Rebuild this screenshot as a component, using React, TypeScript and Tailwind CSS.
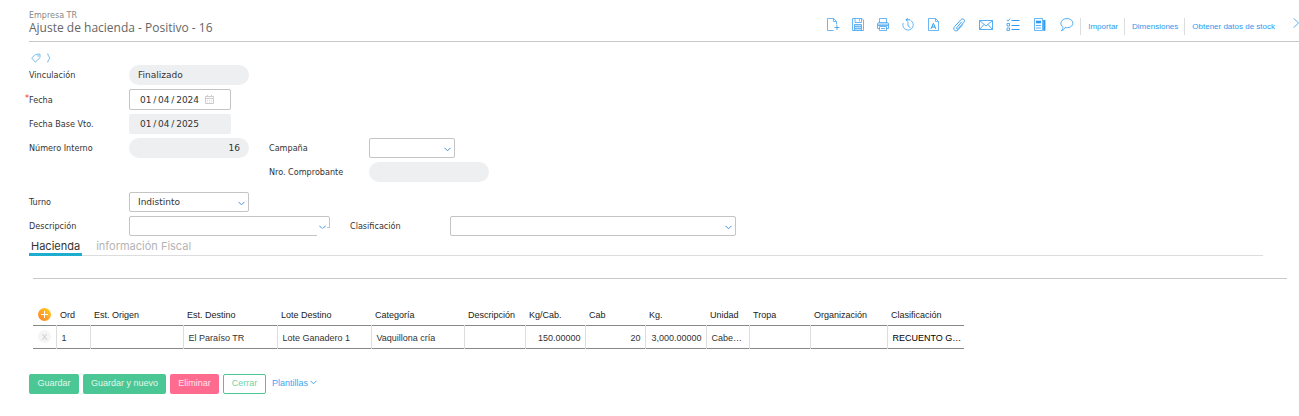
import type { ReactNode } from "react";

const uiFont = "font-['DejaVu_Sans_Condensed','DejaVu_Sans',sans-serif]";
const valueFont = "font-['DejaVu_Sans',sans-serif] text-[9px]";

function Icon({ children, className = "h-3.5 w-3.5" }: { children: ReactNode; className?: string }) {
  return (
    <svg viewBox="0 0 14 14" className={className} fill="none" stroke="currentColor" aria-hidden="true">
      {children}
    </svg>
  );
}

const firstTools: { label: string; icon: ReactNode }[] = [
  {
    label: "Nuevo",
    icon: (
      <>
        <path d="M7.5 12.5H1.5V.5H7.5L10.5 3.5V6.5M7.5 .5V3.5H10.5" strokeWidth=".7" />
        <path d="M11 7V12M8.5 9.5H13.5" strokeWidth=".8" />
      </>
    ),
  },
  {
    label: "Grabar",
    icon: (
      <>
        <path d="M1.5 .5H11L12.5 2V12.5H1.5ZM4 .5V4.5H10.5V.5M3.5 12.5V6.5H10.5V12.5" strokeWidth=".7" />
        <path d="M4 8.5H10M4 10.5H10M8.5 1V3.5" strokeWidth=".6" />
        <path d="M3.5 6.5H10.5V12.5H3.5Z" fill="currentColor" fillOpacity=".3" stroke="none" />
      </>
    ),
  },
  {
    label: "Imprimir",
    icon: (
      <>
        <path d="M3.5 4.5V.5H10.5V4.5M3.5 10.5H1.5V5.5L2.5 4.5H11.5L12.5 5.5V10.5H10.5M3.5 8.5H10.5V12.5H3.5Z" strokeWidth=".7" />
        <path d="M1.5 5H12.5V8H1.5Z" fill="currentColor" fillOpacity=".35" stroke="none" />
        <path d="M2 7.3H12M5 10.5H9" strokeWidth=".7" />
      </>
    ),
  },
  {
    label: "Historial",
    icon: (
      <>
        <path d="M9.5 2.3A5.2 5.2 0 1 1 2.2 5M7 4V8L9.5 9.8" strokeWidth=".7" />
        <path d="M5 1.8H9M6.8 0L5 1.8L6.8 3.6" strokeWidth=".9" />
      </>
    ),
  },
  {
    label: "Exportar PDF",
    icon: (
      <>
        <path d="M2.5 .5H9.5L12.5 3.5V12.5H2.5ZM9.5 .5V3.5H12.5" strokeWidth=".7" />
        <path d="M5 10.8L7.4 5.3L9.8 10.8M6 9H9" />
      </>
    ),
  },
];

const lastTools: { label: string; icon: ReactNode }[] = [
  {
    label: "Adjuntos",
    icon: (
      <path
        d="M9.8 3.7L4.8 9.5C3.8 10.8 5.3 11.6 6.2 10.6L12 4.2C13.6 2 11 -.3 9 1.6L2.6 8.6C.2 11.4 3.6 14.4 6 11.9L10.8 6.5"
        strokeWidth=".9"
      />
    ),
  },
  {
    label: "Correo",
    icon: <path d="M.5 2.5H13.5V11.5H.5ZM.5 2.5L7 8L13.5 2.5M.5 11.5L5 6.5M13.5 11.5L9 6.5" strokeWidth=".8" />,
  },
  {
    label: "Tareas",
    icon: (
      <>
        <path d="M5.5 2.5H13.5M5.5 7.5H13.5M5.5 11.5H13.5" />
        <path d="M.7 1.8L2 3.2L4.2 .5M1 5.5H3.5V8H1ZM1 10H3.5V12.5H1Z" strokeWidth=".8" />
      </>
    ),
  },
  {
    label: "Noticias",
    icon: (
      <>
        <path d="M1.5 .5H9.5V12.5H1.5Z" strokeWidth=".7" />
        <path d="M3 4H8" strokeWidth="2.6" />
        <path d="M3 7.5H8M3 10H8" strokeWidth=".8" />
        <path d="M11.3 2V12.8" strokeWidth="2.2" />
      </>
    ),
  },
  {
    label: "Comentarios",
    icon: (
      <path
        d="M3 9.2C-1 6.5 .8 .6 7 .6S14.7 6.8 10.4 8.9C8.7 9.8 6.5 9.8 5 9.5C4.3 11.3 3.2 12.4 1.4 12.7C2.6 11.7 3.1 10.5 3 9.2Z"
        strokeWidth=".8"
      />
    ),
  },
];

function Chevron({ className = "" }: { className?: string }) {
  return (
    <svg viewBox="0 0 7 5" className={`h-[5px] w-[7px] ${className}`} fill="none" stroke="currentColor" aria-hidden="true">
      <path d="M.5 .8L3.5 3.8L6.5 .8" strokeWidth="1" />
    </svg>
  );
}

function Row({ id, label, children, required = false }: { id: string; label: string; children: ReactNode; required?: boolean }) {
  return (
    <div className="flex items-center">
      <label htmlFor={id} className="relative w-[100px] shrink-0">
        {required && <span className="absolute -left-1 -top-0.5 text-red-500">*</span>}
        {label}
      </label>
      {children}
    </div>
  );
}

function Select({ id, className, value = "" }: { id: string; className: string; value?: string }) {
  return (
    <div className={`relative h-5 ${className}`}>
      <select
        id={id}
        defaultValue={value}
        className={`h-full w-full appearance-none rounded-xs border border-[#c4c4c4] bg-white px-2 text-[#333] outline-none ${valueFont}`}
      >
        <option value={value}>{value}</option>
      </select>
      <Chevron className="pointer-events-none absolute right-1 top-[9px] text-[#4a90dc]" />
    </div>
  );
}

const columns = [
  { name: "Ord", value: "1", width: "w-[34px]" },
  { name: "Est. Origen", value: "", width: "w-[93px]" },
  { name: "Est. Destino", value: "El Paraíso TR", width: "w-[94px]" },
  { name: "Lote Destino", value: "Lote Ganadero 1", width: "w-[94px]" },
  { name: "Categoría", value: "Vaquillona cría", width: "w-[93px]" },
  { name: "Descripción", value: "", width: "w-[61px]" },
  { name: "Kg/Cab.", value: "150.00000", width: "w-[60px]", right: true },
  { name: "Cab", value: "20", width: "w-[60px]", right: true },
  { name: "Kg.", value: "3,000.00000", width: "w-[61px]", right: true },
  { name: "Unidad", value: "Cabe…", width: "w-[43px]" },
  { name: "Tropa", value: "", width: "w-[61px]" },
  { name: "Organización", value: "", width: "w-[77px]" },
  { name: "Clasificación", value: "RECUENTO G…", width: "w-[77px]", dark: true },
];

const linkBase = "flex h-[17px] items-center border-l border-[#ddd] pl-[7px] pt-px";
const readOnlyPill = `h-5 w-[120px] rounded-full bg-[#eeeff1] px-[9px] outline-none ${valueFont}`;
const buttonBase = "h-5 rounded-xs pb-0.5 text-[9px]";

export default function App() {
  return (
    <main className={`bg-white pl-[29px] text-[9px] leading-3 text-[#333] ${uiFont}`}>
      <header className="flex h-[42px] items-start justify-between border-b border-[#c8c8cc]">
        <div className="pt-3 text-[#666]">
          <p className="font-['DejaVu_Sans',sans-serif] text-[8px] leading-2 text-[#888]">Empresa TR</p>
          <h1 className="font-['Open_Sans',sans-serif] text-[12px] leading-[15px]">Ajuste de hacienda - Positivo - 16</h1>
        </div>
        <nav className="flex items-start pt-[18px] font-['Liberation_Sans',sans-serif] text-[8px] text-[#2b9af0]">
          {firstTools.map((t) => (
            <button key={t.label} type="button" aria-label={t.label} className="flex w-[25px] justify-center">
              <Icon>{t.icon}</Icon>
            </button>
          ))}
          {lastTools.map((t) => (
            <button key={t.label} type="button" aria-label={t.label} className="flex w-[27px] justify-center">
              <Icon>{t.icon}</Icon>
            </button>
          ))}
          <a href="#importar" className={`${linkBase} pr-1.5`}>Importar</a>
          <a href="#dimensiones" className={`${linkBase} pr-1.5`}>Dimensiones</a>
          <a href="#stock" className={`${linkBase} pr-[18px]`}>Obtener datos de stock</a>
          <button type="button" aria-label="Siguiente">
            <svg viewBox="0 0 6 10" className="h-2.5 w-1.5" fill="none" stroke="currentColor" aria-hidden="true">
              <path d="M.5 .2L5.5 5L.5 9.8" strokeWidth=".8" />
            </svg>
          </button>
        </nav>
      </header>

      <div className="flex h-[23px] items-center gap-1.5 pl-0.5 pt-2 text-[#5cb0ee]">
        <svg viewBox="0 0 10 10" className="h-2.5 w-2.5" fill="none" stroke="currentColor" aria-hidden="true">
          <path d="M.7 5L4.5 1.5L9 1L9 4.7L4.3 9.2Z" strokeWidth=".8" />
          <circle cx="7.3" cy="2.8" r=".6" strokeWidth=".6" />
        </svg>
        <svg viewBox="0 0 4 10" className="h-2.5 w-1" fill="none" stroke="currentColor" aria-hidden="true">
          <path d="M.7 .5Q1 3 3 5Q1 7 .7 9.5" strokeWidth=".9" />
        </svg>
      </div>

      <form onSubmit={(e) => e.preventDefault()}>
        <section className="flex flex-col gap-1">
          <Row id="vinculacion" label="Vinculación">
            <input id="vinculacion" readOnly defaultValue="Finalizado" className={readOnlyPill} />
          </Row>
          <Row id="fecha" label="Fecha" required>
            <div className="flex h-[21px] w-[102px] items-center rounded-xs border border-[#c4c4c4] pl-2.5">
              <input id="fecha" defaultValue={"01\u2009/\u200904\u2009/\u20092024"} className={`w-[65px] outline-none ${valueFont}`} />
              <svg viewBox="0 0 9 9" className="h-[9px] w-[9px] text-[#ccc]" fill="none" stroke="currentColor" aria-hidden="true">
                <path d="M.5 1.5H8.5V8.5H.5ZM.5 3.5H8.5M2.5 0V2M6.5 0V2" />
                <path d="M2 5.5H7M2 7H7" strokeWidth=".7" strokeDasharray="1 1" />
              </svg>
            </div>
          </Row>
          <Row id="fechaBase" label="Fecha Base Vto.">
            <input
              id="fechaBase"
              readOnly
              defaultValue={"01\u2009/\u200904\u2009/\u20092025"}
              className={`h-5 w-[102px] rounded-xs bg-[#eeeff1] px-[11px] outline-none ${valueFont}`}
            />
          </Row>
          <div className="flex gap-5">
            <Row id="numero" label="Número Interno">
              <input id="numero" readOnly defaultValue="16" className={`${readOnlyPill} text-right`} />
            </Row>
            <Row id="campana" label="Campaña">
              <Select id="campana" className="w-[86px]" />
            </Row>
          </div>
          <div className="pl-60">
            <Row id="comprobante" label="Nro. Comprobante">
              <input id="comprobante" readOnly className={readOnlyPill} />
            </Row>
          </div>
          <div className="pt-1.5">
            <Row id="turno" label="Turno">
              <Select id="turno" value="Indistinto" className="w-[120px]" />
            </Row>
          </div>
          <div className="flex gap-5">
            <Row id="descripcion" label="Descripción">
              <div className="relative">
                <Select id="descripcion" className="w-[201px]" />
                <span className="absolute bottom-0 right-0 h-2 w-[13px] bg-white" />
                <span className="absolute right-0 top-[11px] h-px w-[3px] bg-[#c4c4c4]" />
                <Chevron className="pointer-events-none absolute right-1 top-[9px] text-[#8dbcf5]" />
              </div>
            </Row>
            <Row id="clasificacion" label="Clasificación">
              <Select id="clasificacion" className="w-[286px]" />
            </Row>
          </div>
        </section>

        <div role="tablist" className="mr-9 flex h-5 items-stretch gap-3 border-b border-[#ddd] font-[Inter,sans-serif] text-[11px]">
          <button type="button" role="tab" aria-selected="true" className="-mb-px border-b-3 border-[#1cadd0] px-0.5 pt-0.5 text-[#333]">
            Hacienda
          </button>
          <button type="button" role="tab" aria-selected="false" className="-mb-px border-b-3 border-transparent px-0.5 pt-0.5 text-[#b5b5b5]">
            información Fiscal
          </button>
        </div>

        <section className="ml-1 mr-3 mt-[22px] border-t border-[#c8c8c8] pt-[25px] font-['Liberation_Sans',sans-serif]">
          <table className="w-[931px] table-fixed border-collapse">
            <thead>
              <tr className="h-[21px] border-b border-[#888] text-left text-[#222]">
                <th className="w-[23px] p-0">
                  <button
                    type="button"
                    aria-label="Agregar fila"
                    className="ml-[5px] flex h-[13px] w-[13px] items-center justify-center rounded-full bg-linear-to-bl from-[#ffd21a] to-[#ff7a2a] text-white"
                  >
                    <svg viewBox="0 0 7 7" className="h-[7px] w-[7px]" stroke="currentColor" aria-hidden="true">
                      <path d="M3.5 0V7M0 3.5H7" />
                    </svg>
                  </button>
                </th>
                {columns.map((c) => (
                  <th key={c.name} className={`${c.width} whitespace-nowrap p-0 pl-1 pt-0.5 font-normal`}>
                    {c.name}
                  </th>
                ))}
              </tr>
            </thead>
            <tbody>
              <tr className="h-[23px] border-b border-[#888]">
                <td className="p-0">
                  <button type="button" aria-label="Quitar fila" className="ml-[5px] flex h-[13px] w-[13px] items-center justify-center rounded-full bg-[#f5f5f5] text-[#ccc]">
                    X
                  </button>
                </td>
                {columns.map((c) => (
                  <td
                    key={c.name}
                    className={`whitespace-nowrap border-l border-l-[#ddd] pb-0 pl-[5px] pr-1 pt-0.5 ${c.right ? "text-right" : ""} ${c.dark ? "text-black" : ""}`}
                  >
                    {c.value}
                  </td>
                ))}
              </tr>
            </tbody>
          </table>
        </section>

        <footer className="mt-[25px] flex items-center gap-1 font-['Liberation_Sans',sans-serif]">
          <button type="submit" className={`${buttonBase} w-[50px] bg-[#4bc795] text-[#e0f7ec]`}>Guardar</button>
          <button type="button" className={`${buttonBase} w-[83px] bg-[#4bc795] text-[#e0f7ec]`}>Guardar y nuevo</button>
          <button type="button" className={`${buttonBase} w-[49px] bg-[#ff6b8e] text-[#ffe3ea]`}>Eliminar</button>
          <button type="button" className={`${buttonBase} w-[43px] border border-[#4bc795] text-[#6fd3ab]`}>Cerrar</button>
          <button type="button" className="flex items-center gap-0.5 pb-0.5 pl-0.5 text-[#3fa4f2]">
            Plantillas
            <Chevron />
          </button>
        </footer>
      </form>
    </main>
  );
}
